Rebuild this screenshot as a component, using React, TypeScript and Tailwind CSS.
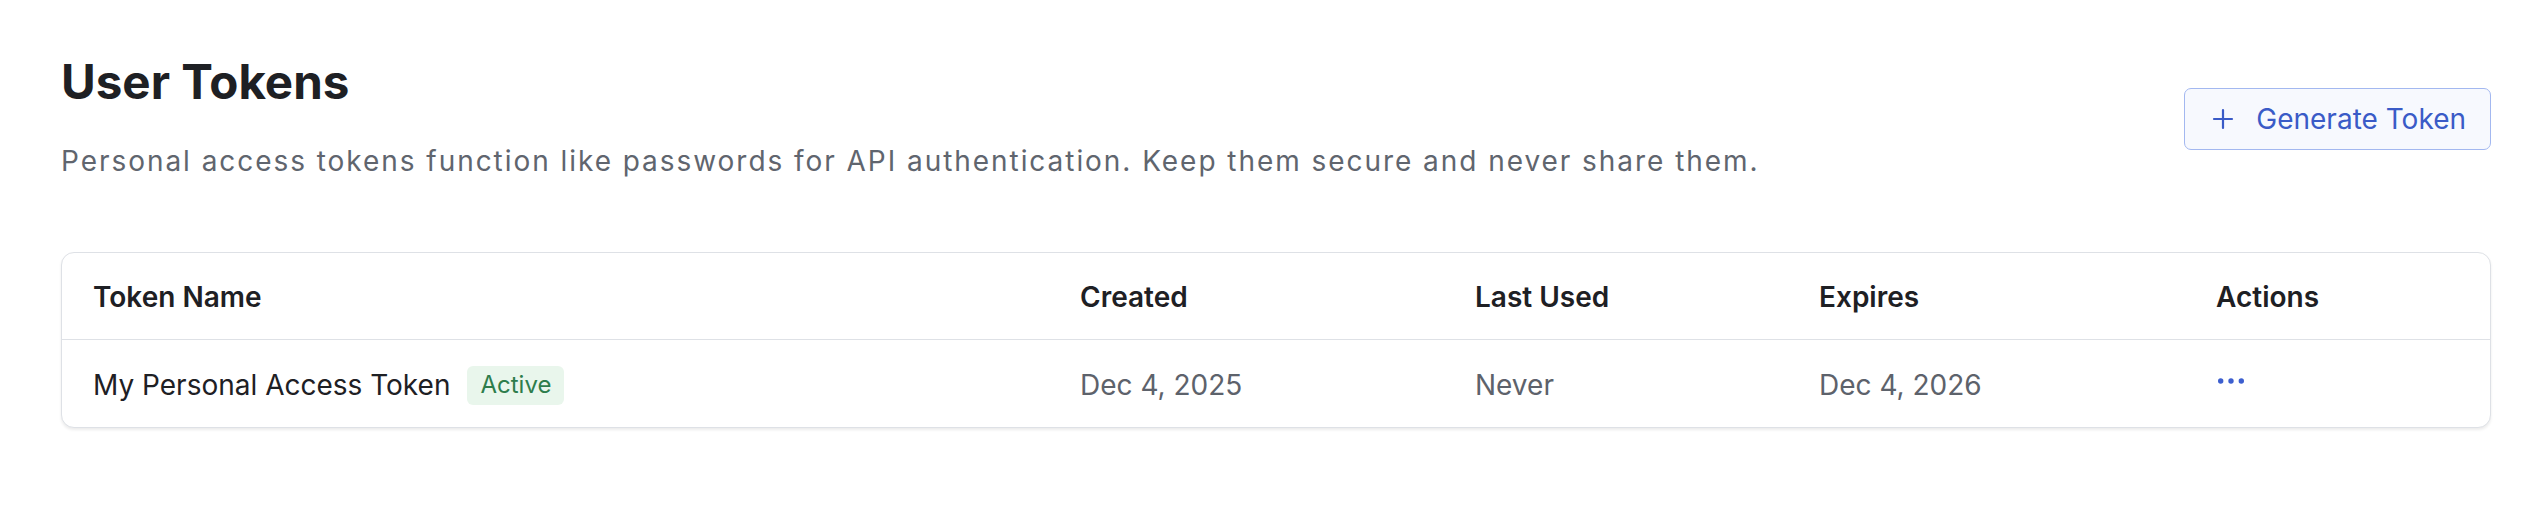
// User tokens settings page

const TOKENS = [
  {
    id: 1,
    name: 'My Personal Access Token',
    status: 'Active',
    created: 'Dec 4, 2025',
    lastUsed: 'Never',
    expires: 'Dec 4, 2026',
  },
]

const COLS = 'grid grid-cols-[987px_395px_344px_397px_1fr]'

function PlusIcon() {
  return (
    <svg width="22" height="22" viewBox="0 0 22 22" fill="none" stroke="currentColor" strokeWidth="2.2" strokeLinecap="round">
      <path d="M11 2v18M2 11h18" />
    </svg>
  )
}

function DotsIcon() {
  return (
    <svg width="26" height="8" viewBox="0 0 26 8" fill="currentColor">
      <circle cx="2.7" cy="4" r="2.7" />
      <circle cx="13" cy="4" r="2.7" />
      <circle cx="23.3" cy="4" r="2.7" />
    </svg>
  )
}

export default function App() {
  return (
    <div
      className="min-h-[520px] bg-white pl-[61px] pr-[57px] pt-[53px]"
      style={{ fontFamily: 'Inter, "Noto Sans", sans-serif' }}
    >
      {/* Header */}
      <div className="flex items-center justify-between">
        <div>
          <h1 className="text-[47.5px] leading-[58px] font-bold text-[#1e2024]">User Tokens</h1>
          <p className="mt-[29px] text-[28px] leading-[43px] tracking-[1.95px] text-[#60656e]">
            Personal access tokens function like passwords for API authentication. Keep them secure and never share them.
          </p>
        </div>
        <button className="flex items-center gap-[22px] h-[62px] pl-[27px] pr-[24px] rounded-[7px] border-[1.6px] border-[#a3b8f0] bg-[#f7f9fe] text-[#3a5bc7] text-[28px] mt-[1px]">
          <PlusIcon />
          <span>Generate Token</span>
        </button>
      </div>

      {/* Table */}
      <div className="mt-[69px] rounded-[13px] border-[1.6px] border-[#dee1e6] bg-white shadow-[0_2px_3px_rgba(0,0,0,0.08)] overflow-hidden">
        <div className={`${COLS} h-[87px] items-center border-b-[1.6px] border-[#dee1e6] text-[28px] font-semibold text-[#1e2024] pt-[2px]`}>
          <div className="pl-[31px]">Token Name</div>
          <div className="pl-[31px]">Created</div>
          <div className="pl-[31px]">Last Used</div>
          <div className="pl-[31px]">Expires</div>
          <div className="pl-[31px]">Actions</div>
        </div>
        {TOKENS.map(t => (
          <div key={t.id} className={`${COLS} h-[87px] items-center text-[28px] pt-[3px]`}>
            <div className="pl-[31px] flex items-center gap-[17px] text-[#1e2024]">
              <span>{t.name}</span>
              <span className="h-[39px] px-[13px] flex items-center rounded-[6px] bg-[#e9f6ec] text-[#2e7d4c] text-[24px]">
                {t.status}
              </span>
            </div>
            <div className="pl-[31px] text-[#5d626b]">{t.created}</div>
            <div className="pl-[31px] text-[#5d626b]">{t.lastUsed}</div>
            <div className="pl-[31px] text-[#5d626b]">{t.expires}</div>
            <div className="pl-[33px] text-[#3d5fcf] flex items-center pb-[8px]">
              <DotsIcon />
            </div>
          </div>
        ))}
      </div>
    </div>
  )
}
